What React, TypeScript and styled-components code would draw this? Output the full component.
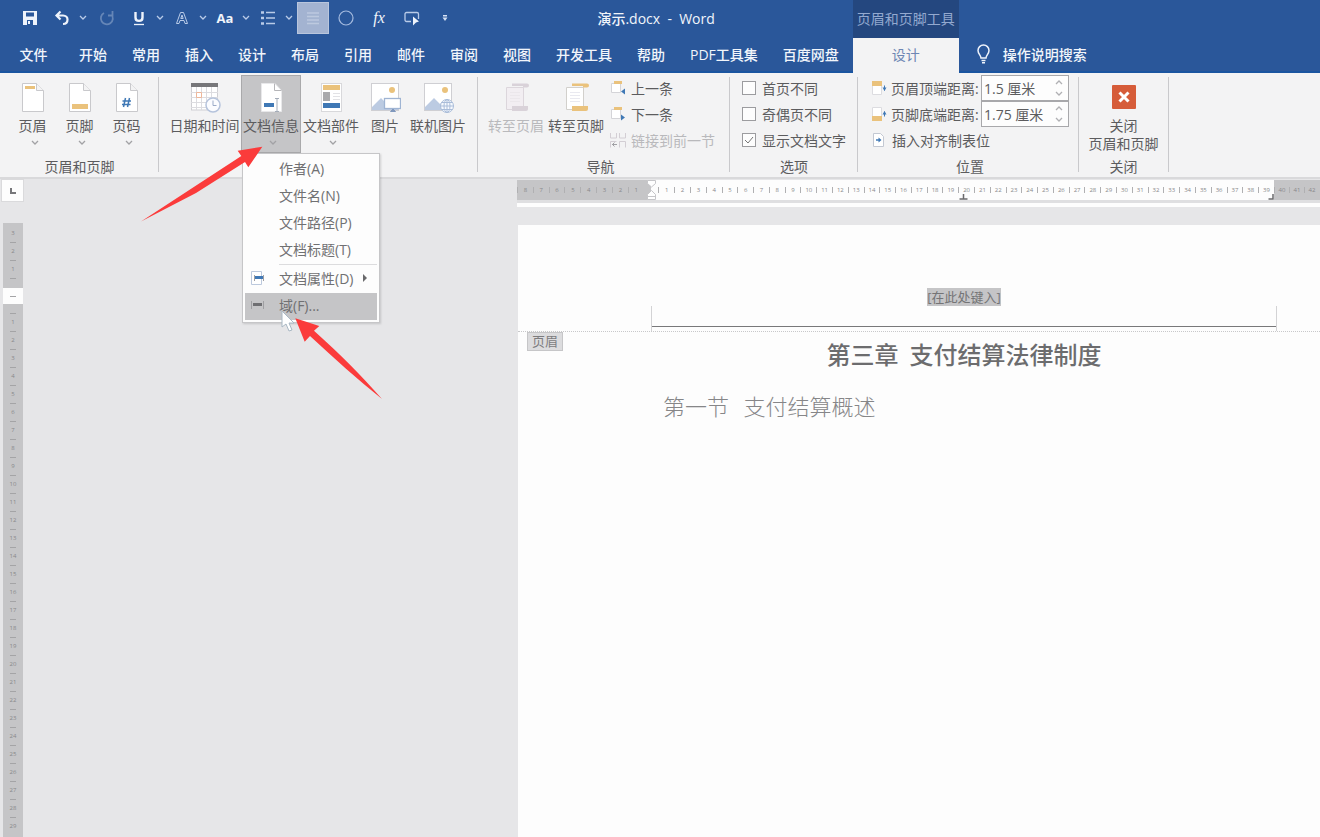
import React from 'react';
import styled, { createGlobalStyle, css } from 'styled-components';

const GlobalStyle = createGlobalStyle`
  *, *::before, *::after { box-sizing: border-box; }
  html, body { margin: 0; padding: 0; }
  body {
    font-family: "Open Sans", "Noto Sans CJK SC", sans-serif;
    font-size: 14px;
    color: #5c5c5e;
    background: #e6e6e8;
  }
  button, input { font: inherit; color: inherit; }
  svg { display: block; flex: none; }
`;

const Shell = styled.div`
  position: relative;
  display: flex;
  flex-direction: column;
  height: 100vh;
  overflow: hidden;
`;

/* ---------- header ---------- */

const Header = styled.header`
  display: grid;
  grid-template-columns: max-content 106px 1fr;
  grid-template-rows: 38px 35px;
  flex: none;
  background: #2a579a;
  color: #f1f5fb;
`;

const TitleBar = styled.div`
  display: flex;
  align-items: center;
  justify-content: space-between;
  padding: 0 138px 2px 14px;
`;

const QuickAccess = styled.div`
  display: flex;
  align-items: center;
  gap: 2px;
`;

const QuickGroup = styled.div<{ $gap?: number }>`
  display: flex;
  gap: ${(p) => p.$gap ?? 0}px;
`;

const QuickButton = styled.button<{ $width?: number; $active?: boolean; $dim?: boolean }>`
  display: flex;
  align-items: center;
  justify-content: center;
  width: ${(p) => p.$width ?? 32}px;
  height: 32px;
  padding: 0;
  border: ${(p) => (p.$active ? '1px solid #b9c6dd' : '0')};
  background: ${(p) => (p.$active ? '#a3b3d1' : 'transparent')};
  opacity: ${(p) => (p.$dim ? 0.3 : 1)};
`;

const GlyphBold = styled.span`
  font-size: 13px;
  font-weight: 700;
`;

const GlyphFx = styled.span`
  font-family: "Liberation Serif", serif;
  font-size: 16px;
  font-style: italic;
`;

const DocTitle = styled.h1`
  margin: 0;
  font-size: 14px;
  font-weight: 500;
  white-space: pre;
`;

const ContextHead = styled.div`
  display: flex;
  align-items: center;
  justify-content: center;
  padding-bottom: 2px;
  background: #24477f;
  color: #93a9cf;
  white-space: nowrap;
`;

const Filler = styled.div``;

const TabRow = styled.nav`
  display: flex;
  padding-right: 1px;
  border-bottom: 2px solid #1b55a0;
`;

const tabBase = css`
  display: flex;
  align-items: center;
  justify-content: center;
  border: 0;
  background: transparent;
  white-space: nowrap;
`;

const Tab = styled.button<{ $file?: boolean }>`
  ${tabBase}
  width: ${(p) => (p.$file ? '67px' : 'auto')};
  margin-right: ${(p) => (p.$file ? 0 : 1)}px;
  padding: 0 12px 2px;
  font-weight: 500;
`;

const ActiveTab = styled.button`
  ${tabBase}
  padding-bottom: 4px;
  background: #f3f3f4;
  color: #6d86b3;
`;

const TellMe = styled.button`
  ${tabBase}
  justify-content: flex-start;
  gap: 12px;
  padding: 0 0 2px 17px;
  border-bottom: 2px solid #1b55a0;
  font-weight: 500;
`;

/* ---------- ribbon ---------- */

const Ribbon = styled.section`
  display: flex;
  flex: none;
  padding-top: 2px;
  background: #f3f3f4;
  border-bottom: 2px solid #d9d9db;
`;

const Separator = styled.div`
  flex: none;
  width: 1px;
  margin: 2px 0 5px;
  background: #c9c9cc;
`;

const Group = styled.div<{ $left: number; $right: number }>`
  flex: none;
  padding: 0 ${(p) => p.$right}px 0 ${(p) => p.$left}px;
`;

const GroupBody = styled.div`
  display: flex;
  height: 78px;
`;

const GroupName = styled.div`
  height: 24px;
  padding-top: 4px;
  line-height: 20px;
  text-align: center;
`;

const Big = styled.button<{ $width: number; $pressed?: boolean }>`
  display: flex;
  flex-direction: column;
  align-items: center;
  width: ${(p) => p.$width}px;
  height: 78px;
  padding: 7px 0 0;
  border: 0;
  background: ${(p) => (p.$pressed ? '#c5c5c7' : 'transparent')};
  box-shadow: ${(p) => (p.$pressed ? 'inset 0 0 0 1px #a9a9ab' : 'none')};
  white-space: nowrap;
  &:disabled { color: #b9b9bc; }
`;

const BigLabel = styled.span`
  margin-top: 3px;
  line-height: 18px;
`;

const Caret = styled.span`
  padding: 5px 0 0 4px;
`;

const Column = styled.div<{ $left?: number }>`
  display: flex;
  flex-direction: column;
  padding-left: ${(p) => p.$left ?? 0}px;
`;

const Small = styled.button`
  display: flex;
  align-items: center;
  gap: 5px;
  height: 26px;
  padding: 0;
  border: 0;
  background: transparent;
  white-space: nowrap;
  &:disabled { color: #b9b9bc; }
`;

const CheckRow = styled.label`
  display: flex;
  align-items: center;
  gap: 6px;
  height: 26px;
  white-space: nowrap;
`;

const Check = styled.input`
  appearance: none;
  width: 14px;
  height: 14px;
  margin: 0;
  border: 1px solid #9c9c9f;
  background: #fdfdfd;
  &:checked {
    background: #fdfdfd url("data:image/svg+xml,%3Csvg xmlns='http://www.w3.org/2000/svg' viewBox='0 0 12 12'%3E%3Cpath d='M2 6l3 3 5-6' fill='none' stroke='%23777'/%3E%3C/svg%3E");
  }
`;

const SpinRow = styled.div`
  display: flex;
  align-items: center;
  height: 26px;
`;

const SpinLabel = styled.label`
  width: 90px;
  margin-left: 4px;
  white-space: nowrap;
`;

const SpinBox = styled.div`
  display: flex;
  width: 88px;
  height: 26px;
  border: 1px solid #a8a8ab;
  background: #fdfdfd;
`;

const SpinInput = styled.input`
  flex: 1;
  min-width: 0;
  padding: 0 0 0 2px;
  border: 0;
  outline: 0;
  background: transparent;
`;

const Steps = styled.div`
  display: flex;
  flex-direction: column;
  width: 18px;
`;

const Step = styled.button`
  display: flex;
  flex: 1;
  align-items: center;
  justify-content: center;
  padding: 0;
  border: 0;
  background: transparent;
`;

/* ---------- drop-down menu ---------- */

const MenuAnchor = styled.div`
  position: relative;
`;

const Menu = styled.ul`
  position: absolute;
  z-index: 2;
  top: 78px;
  left: 1px;
  width: 138px;
  margin: 0;
  padding: 2px;
  border: 1px solid #c6c6c8;
  background: #fdfdfd;
  box-shadow: 1px 1px 2px rgba(0, 0, 0, 0.15);
  list-style: none;
`;

const MenuItem = styled.button<{ $hot?: boolean }>`
  display: grid;
  grid-template-columns: 34px 1fr 18px;
  align-items: center;
  width: 100%;
  height: 27px;
  padding: 0 0 3px;
  border: 0;
  background: ${(p) => (p.$hot ? '#c5c5c7' : 'transparent')};
  color: #707072;
  text-align: left;
  white-space: nowrap;
`;

const MenuIcon = styled.span`
  padding-left: 5px;
`;

const MenuRule = styled.li`
  height: 1px;
  margin: 0 0 1px 34px;
  background: #dcdcde;
`;

/* ---------- workspace ---------- */

const Workspace = styled.main`
  display: flex;
  flex: 1;
  min-height: 0;
`;

const RulerColumn = styled.div`
  display: flex;
  flex: none;
  flex-direction: column;
  width: 24px;
`;

const TabSelector = styled.button`
  display: flex;
  flex: none;
  align-items: center;
  justify-content: center;
  width: 23px;
  height: 23px;
  margin: 0 0 21px 1px;
  padding: 0;
  border: 1px solid #dadadc;
  background: #fdfdfd;
`;

const VRuler = styled.div`
  flex: 1;
  width: 20px;
  margin-left: 3px;
  padding-top: 6px;
  overflow: hidden;
  background: #c5c5c7;
  color: #88888a;
`;

const VBlank = styled.div`
  display: flex;
  align-items: center;
  justify-content: center;
  height: 16px;
  margin: 5px 0;
  background: #fdfdfd;
`;

const VUnit = styled.div`
  display: flex;
  flex-direction: column;
  align-items: center;
  height: 18px;
  font-size: 6px;
  line-height: 9px;
`;

const VDash = styled.i`
  width: 6px;
  height: 1px;
  margin: 4px 0;
  background: #a4a4a6;
`;

const Canvas = styled.div`
  flex: 1;
  min-width: 0;
  margin-left: 493px;
`;

const HRuler = styled.div`
  display: flex;
  height: 20px;
  margin-top: 1px;
  overflow: hidden;
`;

const HPart = styled.div<{ $width?: number; $shaded?: boolean }>`
  position: relative;
  display: flex;
  align-items: center;
  flex: ${(p) => (p.$width ? `0 0 ${p.$width}px` : '1 0 0')};
  min-width: 0;
  background: ${(p) => (p.$shaded ? '#c5c5c7' : '#fdfdfd')};
  color: #88888a;
`;

const HUnit = styled.span<{ $half?: boolean; $fixed?: boolean }>`
  display: flex;
  align-items: center;
  justify-content: center;
  flex: ${(p) => (p.$fixed ? '0 0 15px' : p.$half ? '1 1 0' : '2 1 0')};
  min-width: 0;
  font-size: 6px;
  line-height: 8px;
  border-left: ${(p) => (p.$half ? '0' : '1px solid #b0b0b2')};
  height: 6px;
`;

const RulerEdge = styled.div`
  height: 7px;
  border-top: 3px solid #dfdfe1;
  background: #fdfdfd;
`;

const IndentMark = styled.span<{ $left: number; $bottom?: boolean }>`
  position: absolute;
  left: ${(p) => p.$left}px;
  ${(p) => (p.$bottom ? 'bottom: 0;' : 'top: 0;')}
`;

const Page = styled.article`
  height: 100%;
  margin: 18px 0 0 1px;
  background: #fdfdfd;
`;

const PageHeader = styled.div`
  display: flex;
  flex-direction: column;
  height: 107px;
  border-bottom: 1px dotted #c8c8ca;
`;

const HeaderFrame = styled.div`
  display: flex;
  flex-direction: column;
  align-items: center;
  width: 626px;
  height: 106px;
  margin-left: 133px;
  padding-top: 63px;
`;

const Placeholder = styled.span`
  background: #c5c5c7;
  color: #747476;
  font-size: 13px;
  line-height: 18px;
`;

const HeaderLine = styled.div`
  width: 100%;
  height: 25px;
  border-left: 1px solid #d3d3d5;
  border-right: 1px solid #d3d3d5;
  &::after {
    content: "";
    display: block;
    height: 1px;
    margin-top: 20px;
    background: #78787a;
  }
`;

const PageTag = styled.span`
  display: block;
  width: 36px;
  margin-left: 9px;
  border: 1px solid #c6c6c8;
  background: #dcdcde;
  color: #7c7c7e;
  font-size: 13px;
  line-height: 17px;
  text-align: center;
`;

const Body = styled.div`
  width: 626px;
  margin: -15px 0 0 133px;
  font-family: "Noto Sans CJK SC", sans-serif;
`;

const Chapter = styled.h2`
  margin: 0;
  color: #6c6c6e;
  font-size: 24px;
  font-weight: 500;
  line-height: 36px;
  text-align: center;
  white-space: pre;
`;

const SectionTitle = styled.h3`
  margin: 16px 0 0 12px;
  color: #868688;
  font-size: 22px;
  font-weight: 300;
  line-height: 34px;
  white-space: pre;
`;

/* ---------- overlay ---------- */

const Overlay = styled.svg`
  position: absolute;
  z-index: 3;
  top: 0;
  left: 0;
  pointer-events: none;
`;

/* ---------- icons ---------- */

const ORANGE = '#eac27c';
const BLUE = '#3f78b5';

const Chevron = ({ color = '#a2a2a5', up = false }: { color?: string; up?: boolean }) => (
  <svg width="8" height="6" viewBox="0 0 8 6" fill="none" stroke={color} strokeWidth="1.3">
    <path d={up ? 'M1 5l3-3 3 3' : 'M1 1l3 3 3-3'} />
  </svg>
);

const Sheet = ({ children }: { children?: React.ReactNode }) => (
  <svg width="32" height="32" viewBox="0 0 32 32">
    <path d="M5.500 1.500H19.500L26.500 8.500V29.500H5.500Z" fill="#fff" stroke="#c9c9cc" />
    <path d="M19.500 1.500V8.500H26.500" fill="#f3f3f4" stroke="#c9c9cc" />
    {children}
  </svg>
);

const HeaderIcon = () => <Sheet><rect x="8" y="4" width="10" height="3" fill={ORANGE} /></Sheet>;
const FooterIcon = () => <Sheet><rect x="8" y="22" width="16" height="5" fill={ORANGE} /></Sheet>;
const NumberIcon = () => (
  <Sheet>
    <path d="M14.500 16L12.500 25M18.500 16L16.500 25M11.500 19H20M11 22.500H19.500" stroke={BLUE} strokeWidth="1.500" />
  </Sheet>
);

const CalendarIcon = () => (
  <svg width="32" height="32" viewBox="0 0 32 32" fill="none">
    <rect x="2.500" y="2" width="26" height="26" fill="#fff" stroke="#cfcfd3" />
    <path d="M7.500 5v23M12.500 5v23M17.500 5v23M22.500 5v23M2 10.500h27M2 15.500h27M2 20.500h27M2 25.500h27" stroke="#dcdce0" />
    <path d="M7.500 10.500h5v5h-5z" stroke="#eeb79a" />
    <rect x="2" y="1" width="27" height="4" fill="#77777a" />
    <circle cx="24" cy="23" r="7" fill="#fbfcff" stroke="#b5c3dc" strokeWidth="1.500" />
    <path d="M24 18.500V23.500H27.500" stroke="#9babc8" />
  </svg>
);

const DocInfoIcon = () => (
  <svg width="32" height="32" viewBox="0 0 32 32" fill="none">
    <path d="M6.500 1.500H20L26.500 8.500V29.500H6.500Z" fill="#fff" stroke="#e8e8ea" />
    <path d="M19.500 1.500V8.500H26.500" stroke="#b5b5b8" />
    <rect x="9" y="21" width="10" height="4" fill={BLUE} />
    <path d="M20 16.500h4M20 29.500h4M22 16.500v13" stroke="#a4acb8" />
  </svg>
);

const PartsIcon = () => (
  <svg width="32" height="32" viewBox="0 0 32 32">
    <rect x="6.500" y="1.500" width="20" height="28" fill="#fff" stroke="#d8d8db" />
    <rect x="8" y="3" width="17" height="5" fill={ORANGE} />
    <rect x="8" y="10" width="7" height="9" fill="#a9a9ac" />
    <path d="M18 11.500h7M18 14.500h7M18 17.500h7" stroke="#e2e2e5" />
    <rect x="8" y="21" width="17" height="5" fill={BLUE} />
  </svg>
);

const PictureIcon = ({ online = false }: { online?: boolean }) => (
  <svg width="32" height="32" viewBox="0 0 32 32" fill="none">
    <rect x="2.500" y="1.500" width="27" height="27" fill="#fff" stroke="#cfcfd3" />
    <circle cx="23" cy="8" r="3" fill={ORANGE} />
    <path d="M3 28V25L12 16L18 22L21 19L29 27V28Z" fill="#bccbe2" />
    {online ? (
      <g stroke="#a9bcd9">
        <circle cx="25" cy="24" r="6.500" fill="#f6f9fe" />
        <ellipse cx="25" cy="24" rx="3" ry="6.500" />
        <path d="M25 17.500v13M18.500 24h13M19.500 20.500h11M19.500 27.500h11" />
      </g>
    ) : (
      <g>
        <rect x="15.500" y="16.500" width="16" height="10" fill="#fff" stroke="#9fb4d3" strokeWidth="1.300" />
        <path d="M21.500 29.500h5L24 27Z" fill="#8098bd" stroke="#8098bd" />
      </g>
    )}
  </svg>
);

const GotoIcon = ({ footer = false }: { footer?: boolean }) => {
  const bar = footer ? ORANGE : '#d9d2d9';
  const line = footer ? '#d2d0cc' : '#dcd6dc';
  return (
    <svg width="32" height="32" viewBox="0 0 32 32" fill="none">
      <path d="M6.500 5.500H23.500V27.500H6.500Z" fill={footer ? '#fff' : '#f2eef2'} stroke={line} />
      <path d="M10 10.500h10M10 13.500h10M10 16.500h10M10 19.500h10" stroke={footer ? '#e9e9f0' : '#ebe7eb'} />
      <path d="M12 1.500H27A2 2 0 0 1 27 5.500H23V4H12Z" fill={bar} />
      <path d="M12 24H28V27A2 2 0 0 1 26 29H12Z" fill={bar} />
    </svg>
  );
};

const StepIcon = ({ next = false }: { next?: boolean }) => (
  <svg width="16" height="16" viewBox="0 0 16 16" fill="none">
    <path d="M1.500 3.500h9v9h-9z" fill="#fff" stroke="#d4d4d8" />
    <rect x="4" y="1" width="8" height="3" fill={ORANGE} />
    <path d={next ? 'M11 8.500L15 11.500L11 14.500Z' : 'M15 8.500L11 11.500L15 14.500Z'} fill={BLUE} />
  </svg>
);

const LinkPrevIcon = () => (
  <svg width="16" height="16" viewBox="0 0 16 16" fill="none" stroke="#d3ced4">
    <path d="M0.500 1v5h6V1M9.500 1v5h6V1M0.500 15.500V9.500h6M9.500 15.500v-6h6v6" />
    <path d="M2 12.500h5M4.500 10.500l-2 2 2 2" stroke="#a0a0a4" />
  </svg>
);

const MarginIcon = ({ footer = false }: { footer?: boolean }) => (
  <svg width="16" height="16" viewBox="0 0 16 16" fill="none">
    <path d="M1.500 1.500h9v13h-9z" fill="#fff" stroke="#dcdce0" />
    <rect x="1" y={footer ? 10 : 1} width="10" height="5" fill={ORANGE} />
    <path d="M13.500 5.500v5" stroke={BLUE} />
    <path d={footer ? 'M11.500 8.500L13.500 5L15.500 8.500Z' : 'M11.500 7.500L13.500 11L15.500 7.500Z'} fill={BLUE} />
  </svg>
);

const AlignTabIcon = () => (
  <svg width="16" height="16" viewBox="0 0 16 16" fill="none">
    <path d="M2.500 1.500h7l3 3v10h-10z" fill="#fff" stroke="#c3c8d2" />
    <path d="M5 8h4" stroke={BLUE} strokeWidth="1.500" />
    <path d="M7.500 5.500L10.500 8L7.500 10.500Z" fill={BLUE} />
  </svg>
);

const FieldIcon = ({ page = false }: { page?: boolean }) => (
  <svg width="16" height="16" viewBox="0 0 16 16" fill="none">
    {page && <path d="M1.500 1.500h10v13h-10z" fill="#fff" stroke="#bcc9dd" />}
    <path d={page ? 'M4.500 5v6M13.500 5v6' : 'M1.500 4v8M13.500 4v8'} stroke="#9f9fa2" />
    <rect x={page ? 5 : 3} y="6" width={page ? 8 : 9} height="3" fill={page ? BLUE : '#6f6f72'} />
  </svg>
);

const CloseIcon = () => (
  <svg width="32" height="32" viewBox="0 0 32 32">
    <rect x="4" y="3" width="24" height="24" rx="1" fill="#d65c39" />
    <path d="M11.500 10.500L20.500 19.500M20.500 10.500L11.500 19.500" stroke="#fff" strokeWidth="3" />
  </svg>
);

const SaveIcon = () => (
  <svg width="14" height="14" viewBox="0 0 14 14">
    <path d="M0 0H14V14H0Z" fill="#eef3fb" />
    <path d="M3 1.500h8v4H3zM4 9h6v5H4z" fill="#2a579a" />
    <path d="M5 10h2v3H5z" fill="#eef3fb" />
  </svg>
);

const UndoIcon = () => (
  <svg width="16" height="16" viewBox="0 0 16 16" fill="none" stroke="#eef3fb" strokeWidth="2.200">
    <path d="M6.500 1.500L2.500 5.500L6.500 9.500M3 5.500H9C12 5.500 13.500 7.500 13.500 9.500C13.500 12 12 14 9 14" />
  </svg>
);

const RedoIcon = () => (
  <svg width="16" height="16" viewBox="0 0 16 16" fill="none" stroke="#eef3fb" strokeWidth="1.800">
    <path d="M5 3A6 6 0 1 0 12.500 4.500M13.500 1v4.500H9" />
  </svg>
);

const UnderlineIcon = () => (
  <svg width="14" height="16" viewBox="0 0 14 16" fill="none" stroke="#eef3fb">
    <path d="M3.500 2V7.500C3.500 12 10.500 12 10.500 7.500V2" strokeWidth="2.400" />
    <path d="M2 14.500H12" strokeWidth="1.300" />
  </svg>
);

const OutlineAIcon = () => (
  <svg width="14" height="14" viewBox="0 0 14 14" fill="none" stroke="#b9cbe8">
    <path d="M1.500 12.500L5.500 1.500H8.500L12.500 12.500H10L9 9.500H5L4 12.500ZM5.800 7.500H8.200L7 4Z" />
  </svg>
);

const ListIcon = () => (
  <svg width="16" height="16" viewBox="0 0 16 16" fill="none" stroke="#b9cbe8">
    <path d="M1 2.500h3M1 8h3M1 13.500h3" strokeWidth="2.500" />
    <path d="M6 2.500h9M6 8h9M6 13.500h9" strokeWidth="1.300" />
  </svg>
);

const ParagraphIcon = () => (
  <svg width="14" height="14" viewBox="0 0 14 14" stroke="#bdc9df" strokeWidth="1.500">
    <path d="M1 2h12M1 5.500h12M1 9h12M1 12.500h12" />
  </svg>
);

const CircleIcon = () => (
  <svg width="16" height="16" viewBox="0 0 16 16" fill="none" stroke="#a5bbdf" strokeWidth="1.200">
    <circle cx="8" cy="8" r="7" />
  </svg>
);

const SelectShapeIcon = () => (
  <svg width="16" height="16" viewBox="0 0 16 16" fill="none">
    <path d="M7 11.500H2.500A1.500 1.500 0 0 1 1 10V4A1.500 1.500 0 0 1 2.500 2.500H13A1.500 1.500 0 0 1 14.500 4V9" stroke="#b9cbe8" strokeWidth="1.300" />
    <path d="M9 6.500L15 11.500L12 12.500L9 15.500Z" fill="#eef3fb" />
  </svg>
);

const MoreIcon = () => (
  <svg width="8" height="8" viewBox="0 0 8 8" fill="#d5e1f4">
    <path d="M2 1h4v1.500H2zM1.500 3.500h5L4 7Z" />
  </svg>
);

const BulbIcon = () => (
  <svg width="15" height="20" viewBox="0 0 15 20" fill="none" stroke="#eef3fb" strokeWidth="1.500">
    <path d="M5 14C5 11 2 10 2 6.500A5.500 5.500 0 0 1 13 6.500C13 10 10 11 10 14ZM5.500 16.500h4M6 18.800h3" />
  </svg>
);

/* ---------- parts ---------- */

const Split = ({ name, children }: { name: string; children: React.ReactNode }) => (
  <QuickGroup>
    <QuickButton $width={28} aria-label={name}>{children}</QuickButton>
    <QuickButton $width={13} aria-label={`${name} 选项`}><Chevron color="#b9cbe8" /></QuickButton>
  </QuickGroup>
);

type BigProps = {
  icon: React.ReactNode;
  label: string;
  width: number;
  caret?: boolean;
  pressed?: boolean;
  disabled?: boolean;
};

const BigButton = ({ icon, label, width, caret, pressed, disabled }: BigProps) => (
  <Big $width={width} $pressed={pressed} disabled={disabled}>
    {icon}
    <BigLabel>{label}</BigLabel>
    {caret && <Caret><Chevron /></Caret>}
  </Big>
);

const Spinner = ({ id, label, value, footer }: { id: string; label: string; value: string; footer?: boolean }) => (
  <SpinRow>
    <MarginIcon footer={footer} />
    <SpinLabel htmlFor={id}>{label}</SpinLabel>
    <SpinBox>
      <SpinInput id={id} defaultValue={value} />
      <Steps>
        <Step aria-label="增加"><Chevron up color="#b0b0b3" /></Step>
        <Step aria-label="减少"><Chevron color="#b0b0b3" /></Step>
      </Steps>
    </SpinBox>
  </SpinRow>
);

const tabs = ['开始', '常用', '插入', '设计', '布局', '引用', '邮件', '审阅', '视图', '开发工具', '帮助', 'PDF工具集', '百度网盘'];
const fieldItems = ['作者(A)', '文件名(N)', '文件路径(P)', '文档标题(T)'];
const range = (from: number, to: number) => Array.from({ length: to - from + 1 }, (_, i) => from + i);

export default function App() {
  return (
    <Shell>
      <GlobalStyle />
      <Header>
        <TitleBar>
          <QuickAccess>
            <QuickButton aria-label="保存"><SaveIcon /></QuickButton>
            <Split name="撤消"><UndoIcon /></Split>
            <QuickButton aria-label="重复" $dim><RedoIcon /></QuickButton>
            <Split name="下划线"><UnderlineIcon /></Split>
            <Split name="文本效果"><OutlineAIcon /></Split>
            <Split name="更改大小写"><GlyphBold>Aa</GlyphBold></Split>
            <Split name="项目符号"><ListIcon /></Split>
            <QuickGroup $gap={1}>
              <QuickButton aria-label="段落" $active><ParagraphIcon /></QuickButton>
              <QuickButton aria-label="椭圆"><CircleIcon /></QuickButton>
              <QuickButton aria-label="公式"><GlyphFx>fx</GlyphFx></QuickButton>
              <QuickButton aria-label="选择对象"><SelectShapeIcon /></QuickButton>
              <QuickButton aria-label="自定义快速访问工具栏"><MoreIcon /></QuickButton>
            </QuickGroup>
          </QuickAccess>
          <DocTitle>{'演示.docx  -  Word'}</DocTitle>
        </TitleBar>
        <ContextHead>页眉和页脚工具</ContextHead>
        <Filler />
        <TabRow>
          <Tab $file>文件</Tab>
          {tabs.map((t) => <Tab key={t}>{t}</Tab>)}
        </TabRow>
        <ActiveTab>设计</ActiveTab>
        <TellMe><BulbIcon />操作说明搜索</TellMe>
      </Header>

      <Ribbon>
        <Group $left={9} $right={8}>
          <GroupBody>
            <BigButton icon={<HeaderIcon />} label="页眉" width={47} caret />
            <BigButton icon={<FooterIcon />} label="页脚" width={47} caret />
            <BigButton icon={<NumberIcon />} label="页码" width={47} caret />
          </GroupBody>
          <GroupName>页眉和页脚</GroupName>
        </Group>
        <Separator />
        <Group $left={9} $right={10}>
          <GroupBody>
            <BigButton icon={<CalendarIcon />} label="日期和时间" width={73} />
            <MenuAnchor>
              <BigButton icon={<DocInfoIcon />} label="文档信息" width={60} caret pressed />
              <Menu>
                {fieldItems.map((t) => (
                  <li key={t}><MenuItem><MenuIcon />{t}</MenuItem></li>
                ))}
                <MenuRule role="separator" />
                <li>
                  <MenuItem>
                    <MenuIcon><FieldIcon page /></MenuIcon>
                    文档属性(D)
                    <svg width="12" height="8" viewBox="0 0 12 8" fill="#6a6a6c"><path d="M4 0l4 4-4 4z" /></svg>
                  </MenuItem>
                </li>
                <li><MenuItem $hot><MenuIcon><FieldIcon /></MenuIcon>域(F)...</MenuItem></li>
              </Menu>
            </MenuAnchor>
            <BigButton icon={<PartsIcon />} label="文档部件" width={60} caret />
            <BigButton icon={<PictureIcon />} label="图片" width={48} />
            <BigButton icon={<PictureIcon online />} label="联机图片" width={58} />
          </GroupBody>
        </Group>
        <Separator />
        <Group $left={8} $right={14}>
          <GroupBody>
            <BigButton icon={<GotoIcon />} label="转至页眉" width={60} disabled />
            <BigButton icon={<GotoIcon footer />} label="转至页脚" width={60} />
            <Column $left={4}>
              <Small><StepIcon />上一条</Small>
              <Small><StepIcon next />下一条</Small>
              <Small disabled><LinkPrevIcon />链接到前一节</Small>
            </Column>
          </GroupBody>
          <GroupName>导航</GroupName>
        </Group>
        <Separator />
        <Group $left={12} $right={11}>
          <GroupBody>
            <Column>
              <CheckRow><Check type="checkbox" />首页不同</CheckRow>
              <CheckRow><Check type="checkbox" />奇偶页不同</CheckRow>
              <CheckRow><Check type="checkbox" defaultChecked />显示文档文字</CheckRow>
            </Column>
          </GroupBody>
          <GroupName>选项</GroupName>
        </Group>
        <Separator />
        <Group $left={13} $right={9}>
          <GroupBody>
            <Column>
              <Spinner id="header-distance" label="页眉顶端距离:" value="1.5 厘米" />
              <Spinner id="footer-distance" label="页脚底端距离:" value="1.75 厘米" footer />
              <Small><AlignTabIcon />插入对齐制表位</Small>
            </Column>
          </GroupBody>
          <GroupName>位置</GroupName>
        </Group>
        <Separator />
        <Group $left={0} $right={0}>
          <GroupBody>
            <Big $width={89}>
              <CloseIcon />
              <BigLabel>关闭<br />页眉和页脚</BigLabel>
            </Big>
          </GroupBody>
          <GroupName>关闭</GroupName>
        </Group>
        <Separator />
      </Ribbon>

      <Workspace>
        <RulerColumn>
          <TabSelector aria-label="制表符">
            <svg width="8" height="8" viewBox="0 0 8 8" fill="none" stroke="#77777a" strokeWidth="2"><path d="M2 1v5h5" /></svg>
          </TabSelector>
          <VRuler>
            {[3, 2, 1].map((n) => <VUnit key={n}>{n}<VDash /></VUnit>)}
            <VBlank><VDash /></VBlank>
            {range(1, 29).map((n) => <VUnit key={n}><VDash />{n}</VUnit>)}
          </VRuler>
        </RulerColumn>
        <Canvas>
          <HRuler>
            <HPart $width={134} $shaded>
              {range(1, 8).reverse().map((n) => <HUnit key={n}>{n}</HUnit>)}
              <HUnit $half />
            </HPart>
            <HPart $width={623}>
              <HUnit $half />
              {range(1, 39).map((n) => <HUnit key={n}>{n}</HUnit>)}
              <IndentMark $left={-5}>
                <svg width="11" height="8" viewBox="0 0 11 8"><path d="M1.500 0.500h8v3l-4 3.500-4-3.500z" fill="#fff" stroke="#c6c6c9" /></svg>
              </IndentMark>
              <IndentMark $left={-5} $bottom>
                <svg width="11" height="10" viewBox="0 0 11 10"><path d="M1.500 9.500v-5l4-4 4 4v5zM1.500 6.500h8" fill="#fff" stroke="#c6c6c9" /></svg>
              </IndentMark>
              <IndentMark $left={308} $bottom>
                <svg width="9" height="6" viewBox="0 0 9 6" stroke="#6a6a6c" strokeWidth="1.500"><path d="M0.500 5h8M4.500 0v5" /></svg>
              </IndentMark>
              <IndentMark $left={617} $bottom>
                <svg width="8" height="6" viewBox="0 0 8 6" fill="none" stroke="#6a6a6c" strokeWidth="1.500"><path d="M0.500 5H5V0" /></svg>
              </IndentMark>
            </HPart>
            <HPart $shaded>
              {range(40, 42).map((n) => <HUnit key={n} $fixed>{n}</HUnit>)}
            </HPart>
          </HRuler>
          <RulerEdge />
          <Page>
            <PageHeader>
              <HeaderFrame>
                <Placeholder>[在此处键入]</Placeholder>
                <HeaderLine />
              </HeaderFrame>
            </PageHeader>
            <PageTag>页眉</PageTag>
            <Body>
              <Chapter>{'第三章  支付结算法律制度'}</Chapter>
              <SectionTitle>{'第一节   支付结算概述'}</SectionTitle>
            </Body>
          </Page>
        </Canvas>
      </Workspace>

      <Overlay width="400" height="410" viewBox="0 0 400 410">
        <path d="M282 311V327L286 324L289 331L292 330L289 323H294Z" fill="#fff" stroke="#a9b8c4" />
        <path d="M262.300 146.700L237.700 150.700L241.300 156L141 221.500L196 193L245 162L248.300 167.300Z" fill="#fb3b3b" />
        <path d="M295.300 318.300L319.300 326L314 330.700C340 354 362 376 382 399C358 380 334 358 310 336L304.700 341.700Z" fill="#fb3b3b" />
      </Overlay>
    </Shell>
  );
}
